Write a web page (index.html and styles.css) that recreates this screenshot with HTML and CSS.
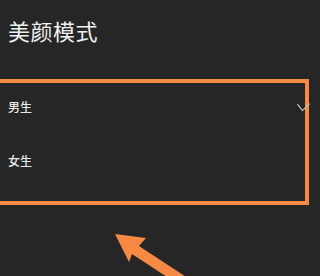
FILE: index.html
```html
<!DOCTYPE html>
<html lang="zh">
<head>
<meta charset="utf-8">
<link rel="stylesheet" href="styles.css">
</head>
<body>
<div class="page">
  <h1 class="title">美颜模式</h1>
  <div class="options">
    <div class="row">
      <span class="label">男生</span>
      <svg class="check" width="13" height="9" viewBox="0 0 13 9"><polyline points="0.5,1.2 5.5,7.6 12.5,0.6" fill="none" stroke="#bdbdbd" stroke-width="1.3"/></svg>
    </div>
    <div class="row">
      <span class="label">女生</span>
    </div>
  </div>
  <svg class="arrow" width="313" height="276" viewBox="0 0 313 276">
    <polygon points="115,234 146,238 139,246 206,290 199,298 132,254 129,262" fill="#f68a45"/>
  </svg>
</div>
</body>
</html>
```
FILE: styles.css
```css
html, body {
  margin: 0;
  padding: 0;
  background: #262626;
}
.page {
  position: relative;
  width: 313px;
  height: 276px;
  overflow: hidden;
  font-family: "Noto Sans CJK SC", "Noto Sans", sans-serif;
}
.title {
  margin: 0;
  padding: 18px 0 0 8px;
  font-size: 22px;
  line-height: 24px;
  font-weight: 400;
  color: #f0f0f0;
  height: 60px;
  box-sizing: border-box;
  letter-spacing: 0.5px;
}
.options {
  margin: 19px 4px 0 -10px;
  border: 4px solid #f68a45;
  padding: 16px 0 32px 14px;
  display: flex;
  flex-direction: column;
  gap: 38px;
}
.row {
  display: flex;
  align-items: center;
  justify-content: space-between;
  height: 16px;
}
.label {
  font-size: 12px;
  line-height: 16px;
  font-weight: 500;
  color: #e8e8e8;
}
.check {
  display: block;
  margin-right: -5px;
}
.arrow {
  position: absolute;
  left: 0;
  top: 0;
}
```
